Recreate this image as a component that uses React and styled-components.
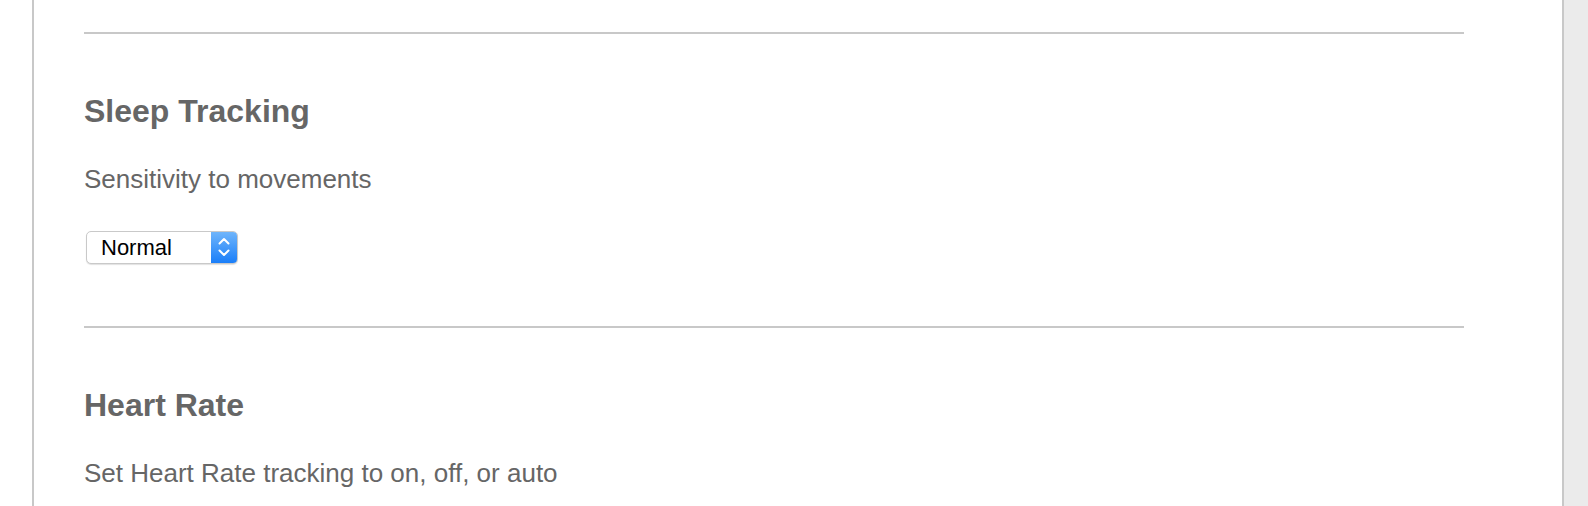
import styled, { createGlobalStyle } from "styled-components";

const GlobalStyle = createGlobalStyle`
  html, body {
    margin: 0;
    height: 100%;
    overflow: hidden;
    background: #ebebeb;
    font-family: "Liberation Sans", Arial, Helvetica, sans-serif;
  }
`;

const Frame = styled.div`
  box-sizing: border-box;
  width: 1564px;
  height: 100vh;
  padding-left: 32px;
  background: #ffffff;
`;

const Panel = styled.div`
  box-sizing: border-box;
  height: 100%;
  padding: 32px 98px 0 50px;
  border-left: 2px solid #c8c8c8;
  border-right: 2px solid #c8c8c8;
  background: #ffffff;
`;

const Section = styled.section`
  border-top: 2px solid #c8c8c8;
  padding: 57px 0 62px;
  display: flex;
  flex-direction: column;
  align-items: flex-start;
`;

const Title = styled.h2`
  margin: 0;
  font-size: 32px;
  line-height: 40px;
  font-weight: 700;
  color: #666666;
`;

const Hint = styled.p`
  margin: 32px 0 0;
  font-size: 26px;
  line-height: 32px;
  color: #666666;
`;

const Select = styled.div`
  box-sizing: border-box;
  margin: 36px 0 0 2px;
  width: 152px;
  height: 33px;
  display: flex;
  align-items: stretch;
  border: 1px solid #c9c9c9;
  border-radius: 5px;
  background: #ffffff;
  box-shadow: 0 1px 1px rgba(0, 0, 0, 0.12);
  overflow: hidden;
`;

const SelectValue = styled.span`
  flex: 1;
  display: flex;
  align-items: center;
  padding-left: 14px;
  font-size: 22px;
  color: #000000;
`;

const Stepper = styled.span`
  width: 26px;
  display: flex;
  align-items: center;
  justify-content: center;
  background: linear-gradient(#6fb5fb, #1a7ef9);
`;

const Chevrons = () => (
  <svg width="26" height="31" viewBox="0 0 26 31" fill="none">
    <path d="M8.5 11.5 L13 7 L17.5 11.5" stroke="#fff" strokeWidth="2" strokeLinecap="round" strokeLinejoin="round" />
    <path d="M8.5 18.5 L13 23 L17.5 18.5" stroke="#fff" strokeWidth="2" strokeLinecap="round" strokeLinejoin="round" />
  </svg>
);

const App = () => {
  return (
    <Frame>
      <GlobalStyle />
      <Panel>
        <Section>
          <Title>Sleep Tracking</Title>
          <Hint>Sensitivity to movements</Hint>
          <Select>
            <SelectValue>Normal</SelectValue>
            <Stepper>
              <Chevrons />
            </Stepper>
          </Select>
        </Section>
        <Section>
          <Title>Heart Rate</Title>
          <Hint>Set Heart Rate tracking to on, off, or auto</Hint>
        </Section>
      </Panel>
    </Frame>
  );
};

export default App;
